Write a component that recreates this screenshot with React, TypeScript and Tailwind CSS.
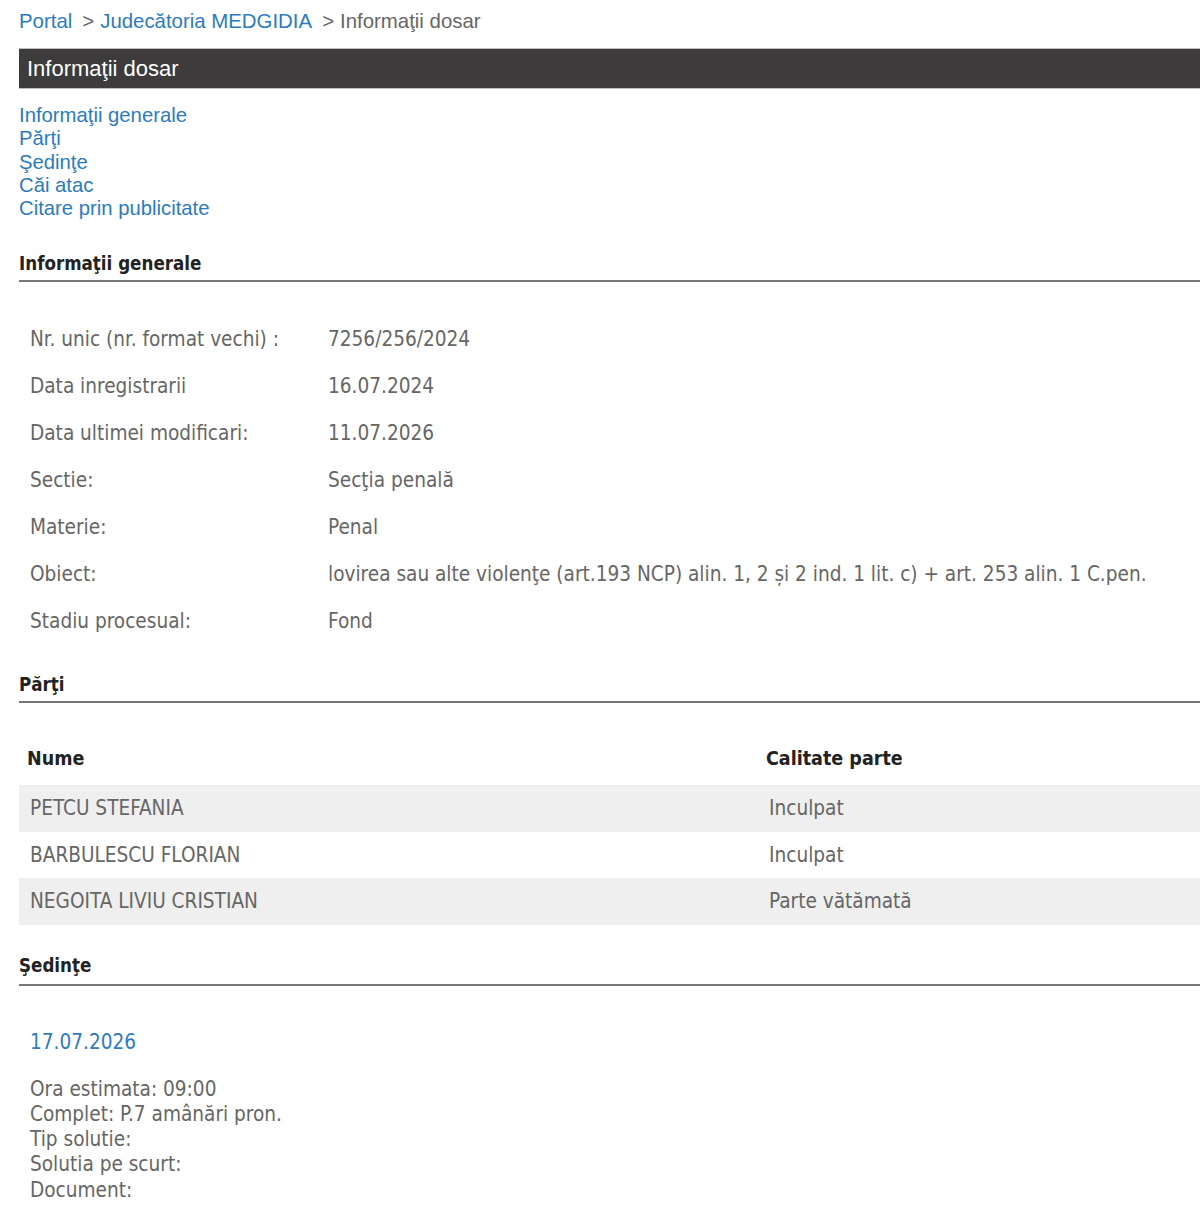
export default function App() {
  const info: [string, string][] = [
    ["Nr. unic (nr. format vechi) :", "7256/256/2024"],
    ["Data inregistrarii", "16.07.2024"],
    ["Data ultimei modificari:", "11.07.2026"],
    ["Sectie:", "Secţia penală"],
    ["Materie:", "Penal"],
    ["Obiect:", "lovirea sau alte violenţe (art.193 NCP) alin. 1, 2 și 2 ind. 1 lit. c) + art. 253 alin. 1 C.pen."],
    ["Stadiu procesual:", "Fond"],
  ];

  const parti: [string, string][] = [
    ["PETCU STEFANIA", "Inculpat"],
    ["BARBULESCU FLORIAN", "Inculpat"],
    ["NEGOITA LIVIU CRISTIAN", "Parte vătămată"],
  ];

  const arial = "font-['Liberation_Sans',Arial,sans-serif]";
  const tahoma = "font-['DejaVu_Sans_Condensed','DejaVu_Sans',Tahoma,sans-serif]";

  return (
    <div className={`min-h-screen w-full bg-white pl-[19px] ${arial}`}>
      {/* Breadcrumb */}
      <div className="flex h-[42px] items-center text-[20.4px] text-[#666]">
        <a className="text-[#2c7bc0]">Portal</a>
        <span className="ml-[10px] mr-[6px]">&gt;</span>
        <a className="text-[#2c7bc0]">Judecătoria MEDGIDIA</a>
        <span className="ml-[10px] mr-[6px]">&gt;</span>
        <span>Informaţii dosar</span>
      </div>

      {/* Title bar */}
      <div className="mt-[6px] flex h-[41px] items-center border-y border-[#bdbdbd] bg-[#3d3b3c] pl-[8px] text-[22px] text-white">
        Informaţii dosar
      </div>

      {/* Anchor links */}
      <div className="mt-[15px] flex flex-col text-[20.3px] leading-[23.3px] text-[#2c7bc0]">
        <a>Informaţii generale</a>
        <a>Părţi</a>
        <a>Şedinţe</a>
        <a>Căi atac</a>
        <a>Citare prin publicitate</a>
      </div>

      {/* Informatii generale */}
      <h2 className={`mt-[30px] border-b-2 border-[#777] pb-[2px] text-[18.6px] font-bold text-[#222] ${tahoma}`}>
        Informaţii generale
      </h2>
      <div className={`mt-[34px] flex flex-col text-[20.6px] text-[#666] ${tahoma}`}>
        {info.map(([label, value]) => (
          <div key={label} className="flex h-[47px] items-center">
            <div className="w-[309px] shrink-0 pl-[11px]">{label}</div>
            <div>{value}</div>
          </div>
        ))}
      </div>

      {/* Parti */}
      <h2 className={`mt-[26px] border-b-2 border-[#777] pb-[2px] text-[18.6px] font-bold text-[#222] ${tahoma}`}>
        Părţi
      </h2>
      <div className={`mt-[29px] text-[20.6px] ${tahoma}`}>
        <div className="flex h-[53px] items-center text-[19.5px] font-bold text-[#222]">
          <div className="w-[747px] shrink-0 pl-[8px]">Nume</div>
          <div>Calitate parte</div>
        </div>
        {parti.map(([nume, calitate], i) => (
          <div
            key={nume}
            className={`flex h-[46.5px] items-center text-[#666] ${i % 2 === 0 ? "bg-[#efefef]" : "bg-white"}`}
          >
            <div className="w-[747px] shrink-0 pl-[11px]">{nume}</div>
            <div className="pl-[3px]">{calitate}</div>
          </div>
        ))}
      </div>

      {/* Sedinte */}
      <h2 className={`mt-[27px] border-b-2 border-[#777] pb-[4px] text-[18.6px] font-bold text-[#222] ${tahoma}`}>
        Şedinţe
      </h2>
      <div className={`pl-[11px] text-[20.6px] ${tahoma}`}>
        <div className="mt-[41px] text-[#2c7bc0]">17.07.2026</div>
        <div className="mt-[19px] flex flex-col leading-[25.25px] text-[#666]">
          <span>Ora estimata: 09:00</span>
          <span>Complet: P.7 amânări pron.</span>
          <span>Tip solutie:</span>
          <span>Solutia pe scurt:</span>
          <span>Document:</span>
        </div>
      </div>
    </div>
  );
}
